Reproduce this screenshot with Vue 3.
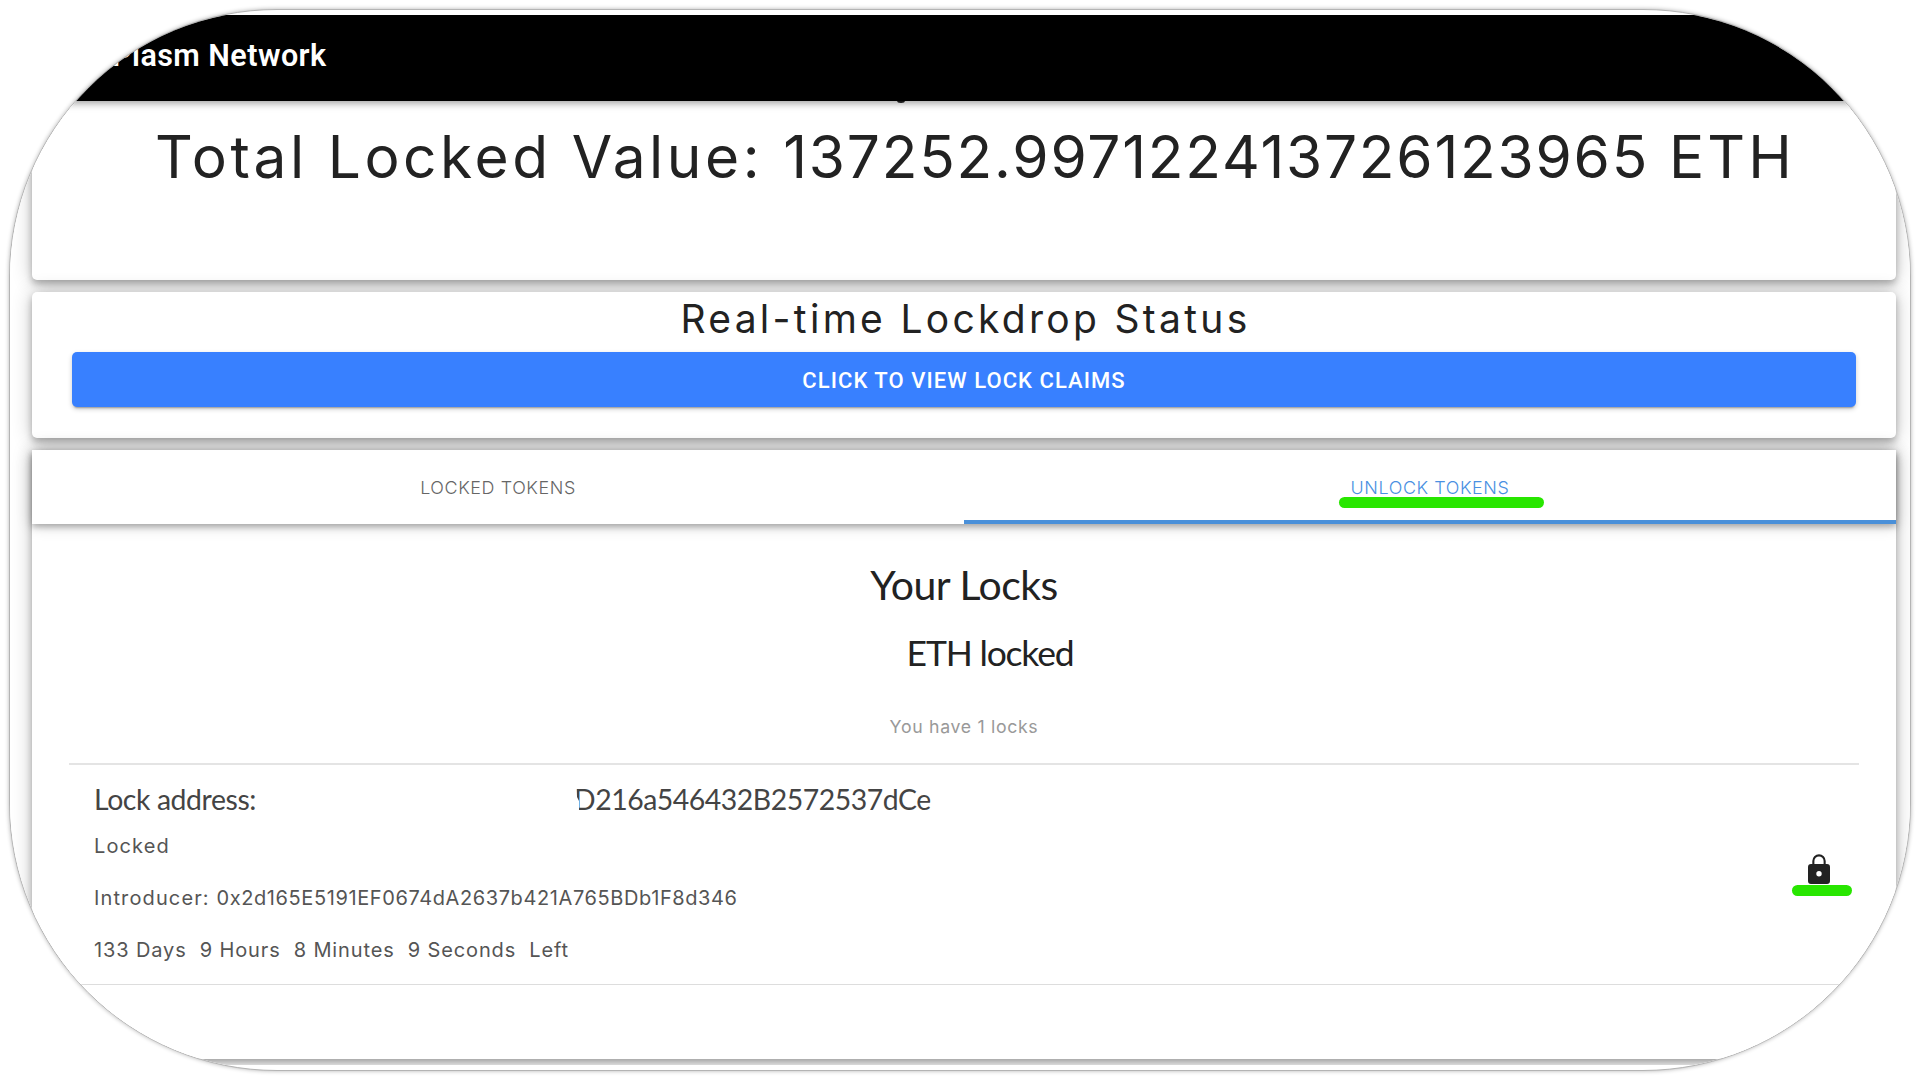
<script setup>
const countdown = [
  { value: 133, unit: 'Days' },
  { value: 9, unit: 'Hours' },
  { value: 8, unit: 'Minutes' },
  { value: 9, unit: 'Seconds' },
]
</script>

<template>
  <main class="frame">
    <div class="screen">
      <header class="topbar">Plasm Network</header>
      <section class="card total">
        <i class="tail"></i>
        <h1>Total Locked Value: <span class="amount">137252.997122413726123965</span> <span class="coin">ETH</span></h1>
      </section>
      <section class="card status">
        <h2>Real-time Lockdrop Status</h2>
        <button>CLICK TO VIEW LOCK CLAIMS</button>
      </section>
      <section class="card locks">
        <nav class="tabs">
          <div class="tab">LOCKED TOKENS</div>
          <div class="tab active"><span class="label">UNLOCK TOKENS<i class="marker"></i></span></div>
        </nav>
        <div class="body">
          <h3>Your Locks</h3>
          <h4>ETH locked</h4>
          <p class="count">You have 1 locks</p>
          <div class="item">
            <div class="info">
              <div class="address"><span class="key">Lock address:</span><span class="value">D216a546432B2572537dCe</span></div>
              <p class="line wide">Locked</p>
              <p class="line"><span class="wide">Introducer: </span>0x2d165E5191EF0674dA2637b421A765BDb1F8d346</p>
              <p class="line time"><template v-for="part in countdown" :key="part.unit">{{ part.value }} {{ part.unit }}&nbsp; </template>Left</p>
            </div>
            <div class="lock">
              <svg viewBox="0 0 22 30"><path fill="#222" fill-rule="evenodd" d="M3 10h1.300V7a6.700 6.700 0 0 1 13.400 0v3H19a3 3 0 0 1 3 3v14a3 3 0 0 1-3 3H3a3 3 0 0 1-3-3V13a3 3 0 0 1 3-3zM6.400 10h9.200V7a4.600 4.600 0 0 0-9.200 0zM11 17a2.700 2.700 0 1 0 0 5.400 2.700 2.700 0 0 0 0-5.400z"/></svg>
              <i class="marker"></i>
            </div>
          </div>
        </div>
      </section>
    </div>
  </main>
</template>

<style>
body { margin: 0; background: #fff; }
</style>

<style scoped>
* { box-sizing: border-box; }
h1, h2, h3, h4, p { margin: 0; font-weight: 400; white-space: nowrap; }
.frame { width: 1902px; height: 1062px; margin: 9px; padding: 5px 0; border: 1px solid #b4b4b4; border-radius: 268px; overflow: hidden; background: #fff; box-shadow: 0 0 4px rgba(0, 0, 0, .3); color: #222; font-family: Inter, sans-serif; }
.screen { height: 1050px; overflow: hidden; display: flex; flex-direction: column; background: #fff; }
.topbar { position: relative; z-index: 2; flex: 0 0 86px; background: #000; color: #fff; padding-left: 102px; font: 600 30.500px/81px Roboto, sans-serif; letter-spacing: .450px; box-shadow: 0 2px 8px rgba(0, 0, 0, .4); }
.card { position: relative; margin: 0 14px 12px 22px; background: #fff; border-radius: 5px; box-shadow: 0 4px 7px rgba(0, 0, 0, .26), 0 1px 20px rgba(0, 0, 0, .24); flex: none; }
.total { height: 179px; padding-left: 123px; }
.total h1 { font-size: 58.600px; line-height: 112px; font-weight: 400; letter-spacing: 3.550px; }
.amount { letter-spacing: 1.760px; }
.coin { letter-spacing: 3px; }
.tail { position: absolute; left: 865px; top: -3px; width: 8px; height: 5px; border-radius: 50%; background: #222; }
.status { height: 146px; padding: 0 40px; text-align: center; }
.status h2 { font-size: 39px; line-height: 53px; height: 60px; font-weight: 400; letter-spacing: 3.300px; padding-left: 3px; }
button { display: block; width: 100%; height: 55px; border: 0; border-radius: 5px; background: #3880ff; color: #fff; font: 500 22px/56px Roboto, sans-serif; letter-spacing: 1.050px; padding: 1px 0 0; box-shadow: 0 3px 2px -2px rgba(0, 0, 0, .3), 0 2px 5px rgba(0, 0, 0, .2); }
.locks { height: 609px; margin-bottom: 0; border-radius: 0 0 5px 5px; }
.tabs { display: flex; height: 74px; box-shadow: 0 3px 6px rgba(0, 0, 0, .26), 0 1px 15px rgba(0, 0, 0, .2); }
.tab { flex: 1; text-align: center; font-size: 17.900px; font-weight: 300; letter-spacing: .600px; line-height: 75px; color: #666; }
.active { color: #4a90e2; border-bottom: 4px solid #4a90d9; }
.label { position: relative; }
.marker { display: block; height: 11px; border-radius: 6px; background: #28e600; }
.label .marker { position: absolute; left: -12px; right: -35px; top: 20px; }
.body { padding: 0 37px; }
h3 { font: 41px/122px Lato, sans-serif; height: 100px; text-align: center; letter-spacing: -.500px; }
h4 { font: 35.500px/58px Lato, sans-serif; height: 62px; text-align: center; padding-left: 52px; letter-spacing: -1.200px; }
.count { font-size: 17.700px; line-height: 81px; height: 77px; text-align: center; color: #999; font-weight: 400; letter-spacing: .680px; }
.item { display: flex; height: 222px; border-top: 2px solid #e4e4e4; border-bottom: 1px solid #ddd; padding-left: 25px; }
.info { flex: 1; color: #444; }
.address { display: flex; font: 28.400px/69px Lato, sans-serif; height: 55px; letter-spacing: -.460px; }
.key { width: 480px; letter-spacing: -.400px; }
.value { clip-path: polygon(1px 0, 100% 0, 100% 100%, 5px 100%, 5px 36px, 3px 32px); }
.line { font-size: 20px; color: #555; font-weight: 400; height: 52px; line-height: 52px; letter-spacing: .600px; }
.wide { letter-spacing: 1.120px; }
.time { letter-spacing: .880px; }
.lock { width: 60px; margin: 89px 7px 0 0; }
.lock svg { display: block; width: 22px; height: 30px; margin: 0 0 1px 16px; }
</style>
